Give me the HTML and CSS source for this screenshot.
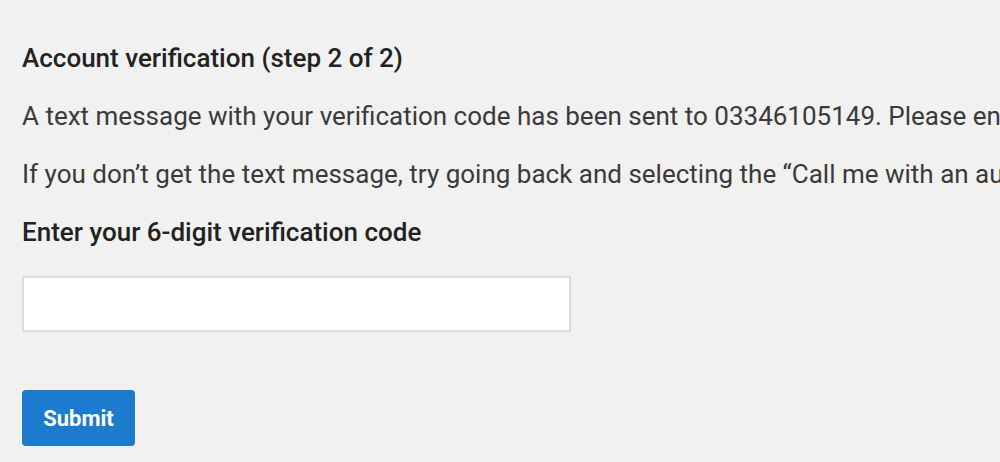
FILE: index.html
```html
<!DOCTYPE html>
<html lang="en">
<head>
  <meta charset="UTF-8" />
  <title>Account verification</title>
  <meta name="viewport" content="width=device-width, initial-scale=1.0" />
  <link rel="stylesheet" href="styles.css">
</head>
<body>
  <div class="verify">
    <h2 class="title">Account verification (step 2 of 2)</h2>
    <p class="msg">A text message with your verification code has been sent to 03346105149. Please enter the code below.</p>
    <p class="msg">If you don’t get the text message, try going back and selecting the “Call me with an automated voice message” option.</p>
    <label class="label" for="code">Enter your 6-digit verification code</label>
    <input class="code-input" id="code" type="text" />
    <button class="submit">Submit</button>
  </div>
</body>
</html>
```

FILE: styles.css
```css
body {
  margin: 0;
  background: #f1f1f1;
  color: #333;
  font-family: Roboto, "Liberation Sans", sans-serif;
  overflow: hidden;
}

.verify {
  display: flex;
  flex-direction: column;
  align-items: flex-start;
  padding: 43px 0 0 22px;
  white-space: nowrap;
}

.title {
  margin: 0 0 28px;
  font-size: 26px;
  font-weight: 500;
  line-height: 30px;
  color: #222;
}

.msg {
  margin: 0 0 28px;
  font-size: 26px;
  line-height: 30px;
  color: #3a3a3a;
}

.label {
  margin: 0 0 29px;
  font-size: 26px;
  font-weight: 500;
  line-height: 30px;
  color: #222;
}

.code-input {
  box-sizing: border-box;
  width: 549px;
  height: 56px;
  margin: 0 0 58px;
  border: 2px solid #dcdcdc;
  background: #fff;
}

.submit {
  width: 113px;
  height: 56px;
  border: none;
  border-radius: 4px;
  background: #1b7bcc;
  color: #fff;
  font-family: inherit;
  font-size: 22px;
  font-weight: 700;
}
```
